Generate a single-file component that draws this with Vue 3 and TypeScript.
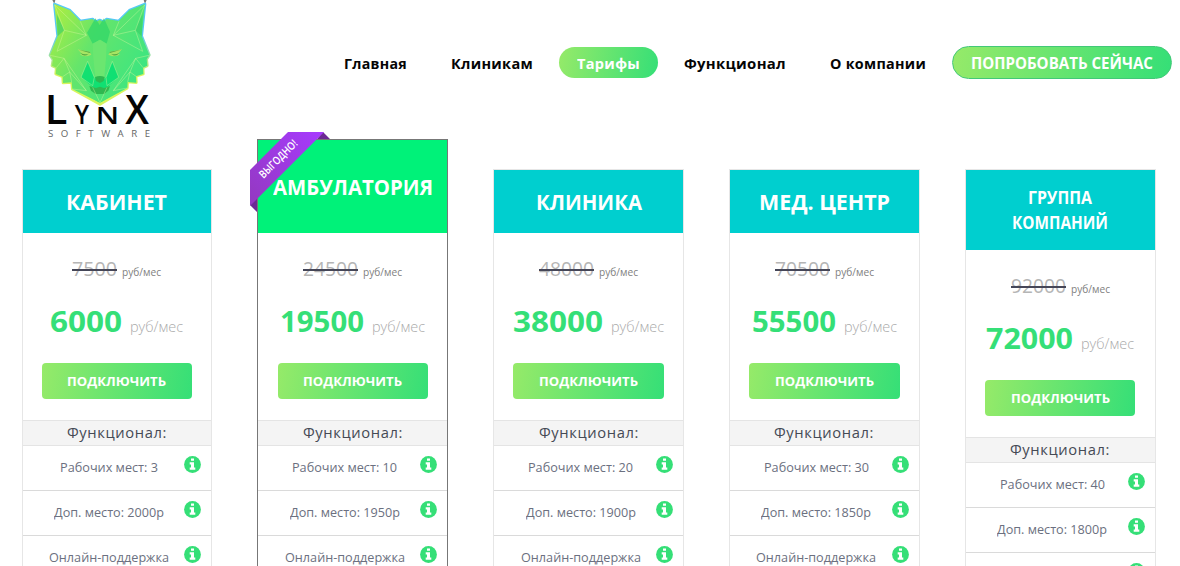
<script setup lang="ts">
import type { Directive } from 'vue'

interface Plan {
  title: { text: string; width: number }[]
  oldPrice: string
  oldWidth: number
  price: string
  priceWidth: number
  features: { text: string; width: number }[]
  kind?: string
}

// Condenses or expands a label horizontally so that it takes the given width.
const vFit: Directive<HTMLElement, number> = {
  mounted(el, { value }) {
    const natural = el.offsetWidth
    if (!natural) return
    const scale = value / el.getBoundingClientRect().width
    el.style.width = `${value}px`
    el.style.transform = `scaleX(${scale})`
  },
}

const nav = [
  { text: 'Главная', width: 63 },
  { text: 'Клиникам', width: 82 },
  { text: 'Тарифы', width: 63, active: true },
  { text: 'Функционал', width: 102 },
  { text: 'О компании', width: 96 },
]

const plans: Plan[] = [
  {
    title: [{ text: 'КАБИНЕТ', width: 101 }],
    oldPrice: '7500', oldWidth: 45, price: '6000', priceWidth: 72,
    features: [{ text: 'Рабочих мест: 3', width: 98 }, { text: 'Доп. место: 2000р', width: 110 }, { text: 'Онлайн-поддержка', width: 120 }],
  },
  {
    title: [{ text: 'АМБУЛАТОРИЯ', width: 160 }], kind: 'featured',
    oldPrice: '24500', oldWidth: 55, price: '19500', priceWidth: 84,
    features: [{ text: 'Рабочих мест: 10', width: 105 }, { text: 'Доп. место: 1950р', width: 110 }, { text: 'Онлайн-поддержка', width: 120 }],
  },
  {
    title: [{ text: 'КЛИНИКА', width: 106 }],
    oldPrice: '48000', oldWidth: 55, price: '38000', priceWidth: 90,
    features: [{ text: 'Рабочих мест: 20', width: 105 }, { text: 'Доп. место: 1900р', width: 110 }, { text: 'Онлайн-поддержка', width: 120 }],
  },
  {
    title: [{ text: 'МЕД. ЦЕНТР', width: 131 }],
    oldPrice: '70500', oldWidth: 55, price: '55500', priceWidth: 84,
    features: [{ text: 'Рабочих мест: 30', width: 105 }, { text: 'Доп. место: 1850р', width: 110 }, { text: 'Онлайн-поддержка', width: 120 }],
  },
  {
    title: [{ text: 'ГРУППА', width: 64 }, { text: 'КОМПАНИЙ', width: 96 }], kind: 'group',
    oldPrice: '92000', oldWidth: 55, price: '72000', priceWidth: 87,
    features: [{ text: 'Рабочих мест: 40', width: 105 }, { text: 'Доп. место: 1800р', width: 110 }, { text: 'Онлайн-поддержка', width: 120 }],
  },
]
</script>

<template>
  <div class="page">
    <header class="top">
      <svg class="logo" viewBox="0 0 420 435" aria-label="LynX Software">
        <defs>
          <linearGradient id="fur" x1="0" y1="0" x2="1" y2="0.55">
            <stop offset="0" stop-color="#b5ee3c" />
            <stop offset="0.48" stop-color="#65e56b" />
            <stop offset="1" stop-color="#3ee580" />
          </linearGradient>
          <linearGradient id="rim" x1="0" y1="0" x2="0" y2="1">
            <stop offset="0.3" stop-color="#55c9f5" />
            <stop offset="0.7" stop-color="#d8f55c" />
          </linearGradient>
        </defs>
        <path d="M67 0h9l-3 12zM341 0h9l-5 12z" fill="#787878" />
        <path d="M73 12L120 31 151 63 188 57 196 66 209 60 222 66 230 57 266 63 298 31 345 12 335 108 358 165 350 178 352 197 339 203 340 222 318 229 319 248 293 246 292 264 210 313 127 267 125 247 99 249 98 230 77 222 79 203 66 197 69 179 60 166 83 108Z" fill="url(#fur)" stroke="url(#rim)" stroke-width="8" stroke-linejoin="round" />
        <path d="M73 12L120 31 151 63 188 57 196 66 209 60 222 66 230 57 266 63 298 31 345 12 335 108 358 165 350 178 352 197 339 203 340 222 318 229 319 248 293 246 292 264 210 308 127 267 125 247 99 249 98 230 77 222 79 203 66 197 69 179 60 166 83 108Z" fill="url(#fur)" />
        <path d="M80 42L103 90 83 109ZM338 42L315 90 335 109Z" fill="#39cf67" opacity=".65" />
        <path d="M196 55L209 75 222 55 240 95 230 131 210 119 188 131 171 98Z" fill="#30d568" opacity=".75" />
        <path d="M173 184L193 232 211 248 228 232 247 184 266 232 231 262 210 268 188 262 153 232Z" fill="#00df72" opacity=".8" />
        <path d="M188 131L210 119 230 131 228 174 223 232 210 240 196 232 190 174Z" fill="#6be670" />
        <path d="M195 231Q210 225 224 231L221 243 210 249 198 243ZM178 258L198 264 210 260 222 264 240 258 235 272 222 282H197L183 272Z" fill="#2fb850" />
        <path d="M143 148L179 155 184 164Q162 174 149 162L155 161ZM276 148L240 155 235 164Q257 174 270 162L264 161Z" fill="#a7e463" />
        <path d="M146 149L182 160 178 155ZM273 149L237 160 241 155ZM151 158Q162 174 176 161Q163 166 151 158ZM268 158Q257 174 243 161Q256 166 268 158Z" fill="#52a944" />
        <path d="M74 15L169 106 81 154 103 91ZM103 91L169 106M169 106L151 64M344 15L250 106 338 154 316 91ZM316 91L250 106M250 106L267 64M60 166L102 175 169 272 127 267M102 175L79 203M102 175L119 216 98 230M119 216L125 247M119 216L169 272M357 166L317 175 250 272 292 264M317 175L339 203M317 175L300 216 318 229M300 216L293 246M300 216L250 272M173 184L153 232 188 257 193 232ZM247 184L266 232 231 257 228 232ZM188 262L210 308 231 262" fill="none" stroke="#d9f7a1" stroke-width="2.2" opacity=".55" />
        <g class="wordmark">
          <text x="44" y="372" font-size="119" textLength="68" lengthAdjust="spacingAndGlyphs">L</text>
          <text x="134" y="371" font-size="79" textLength="43" lengthAdjust="spacingAndGlyphs">Y</text>
          <text x="197" y="372" font-size="70" textLength="70" lengthAdjust="spacingAndGlyphs">N</text>
          <text x="286" y="372" font-size="119" textLength="71" lengthAdjust="spacingAndGlyphs">X</text>
        </g>
        <text class="tagline" x="54" y="411" font-size="29" textLength="306">SOFTWARE</text>
      </svg>
      <nav class="nav">
        <a v-for="item in nav" :key="item.text" class="link" :class="{ active: item.active }">
          <span v-fit="item.width" class="fit">{{ item.text }}</span>
        </a>
        <a class="try"><span v-fit="182" class="fit">ПОПРОБОВАТЬ СЕЙЧАС</span></a>
      </nav>
    </header>

    <main class="plans">
      <article v-for="plan in plans" :key="plan.price" class="card" :class="plan.kind">
        <svg v-if="plan.kind === 'featured'" class="ribbon" viewBox="0 0 80 80">
          <defs>
            <linearGradient id="violet" x1="1" y1="0" x2="0" y2="1">
              <stop offset="0" stop-color="#a73aff" />
              <stop offset="1" stop-color="#9339bf" />
            </linearGradient>
          </defs>
          <path d="M73 0L80 7H67ZM0 73L7 80V66Z" fill="#6c2994" />
          <path d="M38 0H74L0 74V38Z" fill="url(#violet)" />
          <text transform="translate(13.5 47) rotate(-45)" textLength="49" lengthAdjust="spacingAndGlyphs">ВЫГОДНО!</text>
        </svg>
        <h2 class="title">
          <span v-for="line in plan.title" :key="line.text" v-fit="line.width" class="fit">{{ line.text }}</span>
        </h2>
        <div class="old">
          <span class="struck"><span v-fit="plan.oldWidth" class="fit">{{ plan.oldPrice }}</span></span>
          <small><span v-fit="39" class="fit">руб/мес</span></small>
        </div>
        <div class="price">
          <strong><span v-fit="plan.priceWidth" class="fit">{{ plan.price }}</span></strong>
          <small><span v-fit="53" class="fit">руб/мес</span></small>
        </div>
        <button class="connect"><span v-fit="99" class="fit">ПОДКЛЮЧИТЬ</span></button>
        <div class="caption"><span v-fit="100" class="fit">Функционал:</span></div>
        <ul class="features">
          <li v-for="feature in plan.features" :key="feature.text">
            <span class="label"><span v-fit="feature.width" class="fit">{{ feature.text }}</span></span>
            <svg class="info" viewBox="0 0 17 17">
              <circle cx="8.5" cy="8.5" r="8.4" fill="#35df77" />
              <path d="M7 2.4h3v2.4H7zM5.7 6.3H10v5.2h1.3v2.2H5.7v-2.2H7v-3H5.7z" fill="#fff" />
            </svg>
          </li>
        </ul>
      </article>
    </main>
  </div>
</template>

<style>
html, body { margin: 0; overflow: hidden; background: #fff; }
</style>

<style scoped>
* { box-sizing: border-box; }
.page { width: 1180px; height: 566px; overflow: hidden; font-family: "Open Sans", "Noto Sans", sans-serif; }
.fit { display: inline-block; white-space: nowrap; transform-origin: 0 50%; text-align: left; }
.top { height: 139px; display: flex; padding-left: 30px; }
.logo { flex: none; width: 140px; height: 145px; }
.wordmark { font-family: "Open Sans", sans-serif; font-weight: 600; fill: #050505; }
.tagline { font-family: "Open Sans", sans-serif; font-weight: 400; fill: #666; }
.nav { display: flex; align-items: center; gap: 8px; height: 33px; margin: 46px 0 0 156px; }
.link { height: 31px; padding: 0 18px; border-radius: 16px; font-size: 15px; line-height: 32px; font-weight: 700; letter-spacing: .3px; color: #050505; }
.link.active { color: #fff; background: linear-gradient(100deg, #96ea69, #35df77); }
.try { height: 33px; padding: 0 18px; border: 1px solid #42c878; border-radius: 17px; background: linear-gradient(100deg, #96ea69, #35df77); color: #fff; font-size: 15.5px; line-height: 32px; font-weight: 700; }
.plans { display: grid; grid-template-columns: repeat(5, 190.8px); gap: 45px; align-items: start; padding-left: 21.6px; }
.card { position: relative; margin-top: 30px; border: 1px solid #e6e6e6; text-align: center; height: 480px; }
.title { display: flex; flex-direction: column; align-items: center; justify-content: center; height: 63px; margin: 0; padding: 0 0 2px; background: #00cfcf; color: #fff; font-size: 22px; line-height: 30px; font-weight: 700; }
.featured { margin-top: 0; height: 510px; border-color: #777; }
.featured .title { height: 93px; background: #00f279; }
.group .title { height: 80px; padding: 0; font-size: 17px; line-height: 25px; }
.ribbon { position: absolute; left: -8px; top: -8px; width: 80px; height: 80px; }
.ribbon text { font-size: 11px; font-weight: 600; fill: #fff; }
.old { display: flex; justify-content: center; align-items: baseline; gap: 5px; height: 62px; padding-top: 22px; font-size: 19.5px; line-height: 28px; color: #b5b5b5; }
.old small { font-size: 10px; color: #808080; }
.struck { position: relative; }
.struck::after { content: ""; position: absolute; left: 0; right: 0; top: 14px; height: 2px; background: #454657; }
.price { display: flex; justify-content: center; align-items: baseline; gap: 8px; height: 68px; padding-top: 6px; font-size: 28px; line-height: 40px; color: #35df77; }
.price strong { font-weight: 700; }
.price small { font-size: 14px; font-weight: 300; color: #aaa; }
.connect { display: block; width: 150.5px; height: 36px; margin: 0 auto 21px; padding: 0; border: 0; border-radius: 4px; background: linear-gradient(100deg, #96ea69, #35df77); color: #fff; font: 700 13px/36px "Open Sans", sans-serif; }
.caption { height: 26px; border: 1px solid #e4e4e4; border-width: 1px 0; background: #f4f4f4; font-size: 14.5px; line-height: 24px; letter-spacing: .6px; color: #454a55; }
.features { margin: 0; padding: 0; list-style: none; }
.features li { display: flex; align-items: flex-start; height: 45px; border-bottom: 1px solid #dadada; padding: 9px 10px 0 0; }
.label { flex: 1; padding-left: 11px; font-size: 13px; line-height: 24px; color: #6b7080; }
.info { width: 17px; height: 17px; margin-top: 1px; }
</style>
